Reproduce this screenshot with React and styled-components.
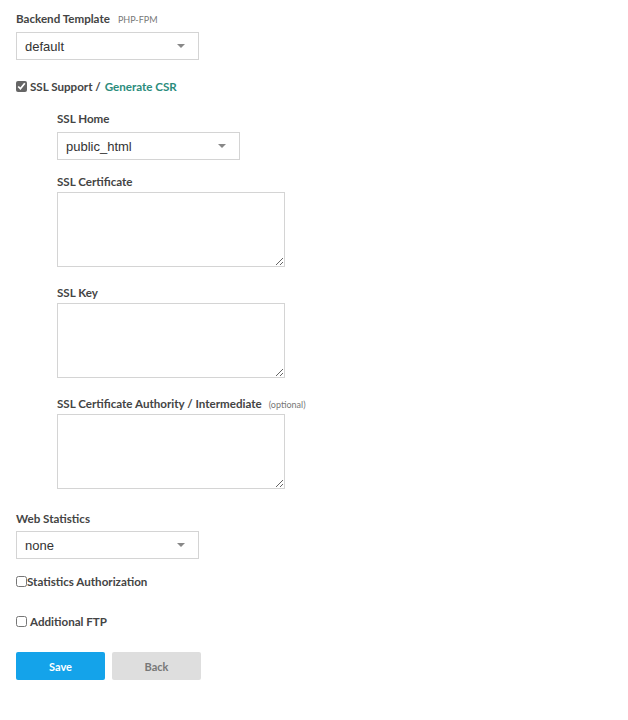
import React from "react";
import styled, { createGlobalStyle } from "styled-components";

const Global = createGlobalStyle`
  html, body { margin: 0; padding: 0; background: #fff; }
  body { font-family: Lato, "Open Sans", sans-serif; color: #444; }
`;

const Form = styled.form`
  display: flex;
  flex-direction: column;
  padding: 11px 0 0 16px;
  width: 612px;
  box-sizing: border-box;
`;

const Label = styled.div`
  height: 16px;
  line-height: 16px;
  font-size: 11.6px;
  font-weight: 700;
  color: #444;
  margin-top: ${(p) => p.$mt || 0}px;
  margin-bottom: ${(p) => p.$mb ?? 5}px;
  white-space: nowrap;
`;

const Hint = styled.span`
  font-size: 9px;
  font-weight: 400;
  color: #777;
  margin-left: ${(p) => p.$ml || 8}px;
  text-transform: ${(p) => (p.$upper ? "uppercase" : "none")};
`;

const SelectWrap = styled.div`
  position: relative;
  width: ${(p) => p.$w}px;
  height: 28px;
  &::after {
    content: "";
    position: absolute;
    right: 14px;
    top: 12px;
    border-left: 4px solid transparent;
    border-right: 4px solid transparent;
    border-top: 4px solid #888;
    pointer-events: none;
  }
`;

const Select = styled.select`
  appearance: none;
  -webkit-appearance: none;
  width: 100%;
  height: 100%;
  box-sizing: border-box;
  border: 1px solid #d4d4d4;
  border-radius: 0;
  background: #fff;
  padding: 0 0 0 8px;
  font-family: "Liberation Sans", Arial, sans-serif;
  font-size: 13px;
  color: #333;
  outline: none;
`;

const CheckRow = styled.label`
  display: flex;
  align-items: center;
  height: 16px;
  gap: ${(p) => p.$gap ?? 3}px;
  margin-top: ${(p) => p.$mt || 0}px;
  font-size: 11.6px;
  font-weight: 700;
  color: #444;
  white-space: nowrap;
`;

const Check = styled.input.attrs({ type: "checkbox" })`
  width: 11px;
  height: 11px;
  margin: 0;
  accent-color: #666;
`;

const Link = styled.a`
  color: #2b8c7c;
  text-decoration: none;
  margin-left: 4px;
`;

const Indent = styled.div`
  display: flex;
  flex-direction: column;
  padding-left: 41px;
`;

const TextArea = styled.textarea`
  display: block;
  width: 228px;
  height: 75px;
  box-sizing: border-box;
  border: 1px solid #d4d4d4;
  border-radius: 0;
  font-family: "Liberation Sans", Arial, sans-serif;
  font-size: 13px;
  outline: none;
  resize: both;
`;

const Buttons = styled.div`
  display: flex;
  gap: 7px;
  margin-top: 23px;
`;

const Button = styled.button`
  width: 89px;
  height: 28px;
  border: none;
  border-radius: 2px;
  font-family: Lato, "Open Sans", sans-serif;
  font-size: 11px;
  font-weight: 700;
  cursor: pointer;
  background: ${(p) => (p.$primary ? "#14a3ea" : "#dedede")};
  color: ${(p) => (p.$primary ? "#fff" : "#777")};
  padding: 0;
`;

export default function App() {
  return (
    <>
      <Global />
      <Form onSubmit={(e) => e.preventDefault()}>
        <Label>
          Backend Template<Hint $upper>PHP-FPM</Hint>
        </Label>
        <SelectWrap $w={183}>
          <Select defaultValue="default">
            <option>default</option>
          </Select>
        </SelectWrap>

        <CheckRow $mt={18}>
          <Check defaultChecked />
          <span>
            SSL Support /<Link href="#">Generate CSR</Link>
          </span>
        </CheckRow>

        <Indent>
          <Label $mt={17}>SSL Home</Label>
          <SelectWrap $w={183}>
            <Select defaultValue="public_html">
              <option>public_html</option>
            </Select>
          </SelectWrap>

          <Label $mt={14} $mb={2}>SSL Certificate</Label>
          <TextArea />

          <Label $mt={18} $mb={2}>SSL Key</Label>
          <TextArea />

          <Label $mt={18} $mb={2}>
            SSL Certificate Authority / Intermediate<Hint $ml={7}>(optional)</Hint>
          </Label>
          <TextArea />
        </Indent>

        <Label $mt={22} $mb={4}>Web Statistics</Label>
        <SelectWrap $w={183}>
          <Select defaultValue="none">
            <option>none</option>
          </Select>
        </SelectWrap>

        <CheckRow $mt={14} $gap={0}>
          <Check />
          <span>Statistics Authorization</span>
        </CheckRow>

        <CheckRow $mt={24}>
          <Check />
          <span>Additional FTP</span>
        </CheckRow>

        <Buttons>
          <Button $primary type="submit">Save</Button>
          <Button type="button">Back</Button>
        </Buttons>
      </Form>
    </>
  );
}
